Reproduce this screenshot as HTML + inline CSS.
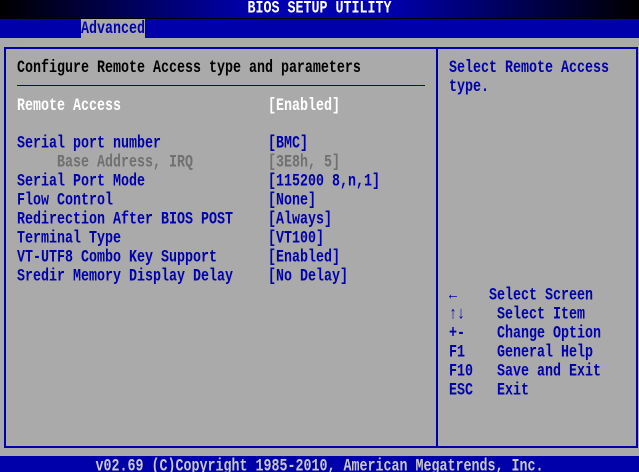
<!DOCTYPE html>
<html><head><meta charset="utf-8"><style>
*{margin:0;padding:0}
html,body{width:639px;height:472px;overflow:hidden}
body{background:#aaaaaa;position:relative;font-family:"Liberation Mono","DejaVu Sans Mono",monospace;font-size:13.33px;font-weight:bold}
.t{position:absolute;height:19px;line-height:19px;white-space:pre;transform:scaleY(1.3);transform-origin:50% 50%;margin-top:2px}
.b{color:#0000aa}.w{color:#fff}.g{color:#707070}.k{color:#000}
#top{position:absolute;left:0;top:0;width:639px;height:18px;background:linear-gradient(to right,#000 0%,#0000b0 40%,#0000b0 60%,#000 100%);border-bottom:1px solid #000}
#menu{position:absolute;left:0;top:19px;width:639px;height:19px;background:#0000aa}
#adv{position:absolute;left:81px;top:19px;width:64px;height:19px;background:#aaaaaa}
#frame{position:absolute;left:4px;top:47px;width:630px;height:397px;border:2px solid #0000aa}
#div{position:absolute;left:436px;top:47px;width:2px;height:400px;background:#0000aa}
#hr{position:absolute;left:17px;top:85px;width:408px;height:1px;background:#0000aa}
#foot{position:absolute;left:0;top:456px;width:639px;height:16px;background:#0000aa}
</style></head><body>
<div id="top"></div>
<div class="t w" style="left:0;width:639px;text-align:center;top:-1px;height:18px;line-height:18px">BIOS SETUP UTILITY</div>
<div id="menu"></div><div id="adv"></div>
<div class="t b" style="left:81px;top:18px">Advanced</div>
<div id="frame"></div><div id="div"></div><div id="hr"></div>
<div class="t k" style="left:17px;top:57px">Configure Remote Access type and parameters</div>
<div class="t w" style="left:17px;top:95px">Remote Access</div>
<div class="t w" style="left:268px;top:95px">[Enabled]</div>
<div class="t b" style="left:17px;top:133px">Serial port number</div>
<div class="t b" style="left:268px;top:133px">[BMC]</div>
<div class="t g" style="left:57px;top:152px">Base Address, IRQ</div>
<div class="t g" style="left:268px;top:152px">[3E8h, 5]</div>
<div class="t b" style="left:17px;top:171px">Serial Port Mode</div>
<div class="t b" style="left:268px;top:171px">[115200 8,n,1]</div>
<div class="t b" style="left:17px;top:190px">Flow Control</div>
<div class="t b" style="left:268px;top:190px">[None]</div>
<div class="t b" style="left:17px;top:209px">Redirection After BIOS POST</div>
<div class="t b" style="left:268px;top:209px">[Always]</div>
<div class="t b" style="left:17px;top:228px">Terminal Type</div>
<div class="t b" style="left:268px;top:228px">[VT100]</div>
<div class="t b" style="left:17px;top:247px">VT-UTF8 Combo Key Support</div>
<div class="t b" style="left:268px;top:247px">[Enabled]</div>
<div class="t b" style="left:17px;top:266px">Sredir Memory Display Delay</div>
<div class="t b" style="left:268px;top:266px">[No Delay]</div>
<div class="t b" style="left:449px;top:57px">Select Remote Access</div>
<div class="t b" style="left:449px;top:76px">type.</div>
<div class="t b" style="left:449px;top:285px">←    Select Screen</div>
<div class="t b" style="left:449px;top:304px">↑↓</div><div class="t b" style="left:497px;top:304px">Select Item</div>
<div class="t b" style="left:449px;top:323px">+-</div><div class="t b" style="left:497px;top:323px">Change Option</div>
<div class="t b" style="left:449px;top:342px">F1</div><div class="t b" style="left:497px;top:342px">General Help</div>
<div class="t b" style="left:449px;top:361px">F10</div><div class="t b" style="left:497px;top:361px">Save and Exit</div>
<div class="t b" style="left:449px;top:380px">ESC</div><div class="t b" style="left:497px;top:380px">Exit</div>
<div id="foot"></div>
<div class="t" style="color:#c8c8c8;left:0;width:639px;text-align:center;top:456px">v02.69 (C)Copyright 1985-2010, American Megatrends, Inc.</div>
</body></html>
